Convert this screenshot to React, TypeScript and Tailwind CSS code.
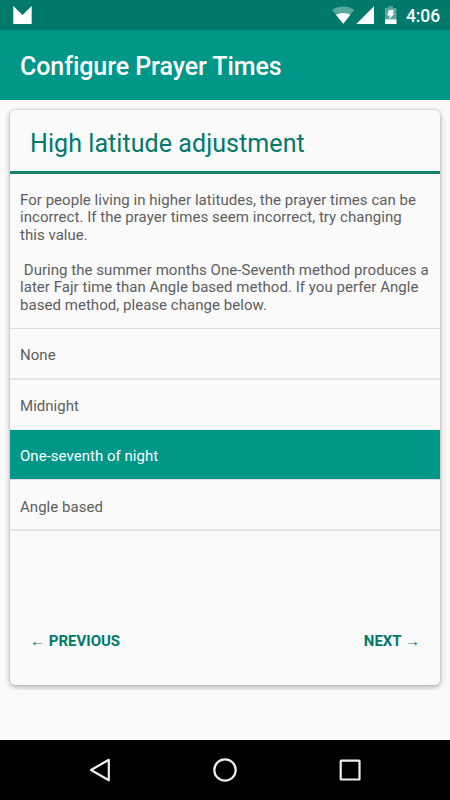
const introLines = [
  { text: "For people living in higher latitudes, the prayer times can be" },
  { text: "incorrect. If the prayer times seem incorrect, try changing" },
  { text: "this value." },
  { text: " " },
  { text: " During the summer months One-Seventh method produces a" },
  { text: "later Fajr time than Angle based method. If you perfer Angle" },
  { text: "based method, please change below." },
];

const options = [
  { label: "None", row: "h-[51px] border-b-2 border-[#e6e6e6] text-[#5e5e5e] leading-[53px]" },
  { label: "Midnight", row: "h-[50px] border-b border-[#ececec] text-[#5e5e5e] leading-[52px]" },
  { label: "One-seventh of night", row: "h-[50px] border-b border-[#dfdfdf] bg-[#009688] bg-clip-padding text-white leading-[53px]" },
  { label: "Angle based", row: "h-[51px] border-b-2 border-[#e6e6e6] text-[#5e5e5e] leading-[54px]" },
];

function StatusBar() {
  return (
    <div className="flex h-[30px] items-center bg-[#00796b]">
      <svg className="ml-[13px]" width="20" height="30" viewBox="0 0 20 30">
        <path d="M0.3 6 L9.5 15 L18.7 6 V24 H0.3 Z" fill="#fff" />
      </svg>
      <div className="grow" />
      <svg width="72" height="30" viewBox="330 0 72 30">
        <path d="M343.2 23.7 L332 9.8 Q337 6.4 343.2 6.4 Q349.4 6.4 354.3 9.8 Z" fill="#fff" fillOpacity="0.35" />
        <path d="M343.2 23.7 L336 14.8 Q343.2 11.2 350.4 14.8 Z" fill="#fff" />
        <path d="M374 6.2 V24 H356.3 Z" fill="#fff" />
        <path d="M385 8 H388.3 V6.2 H393 V8 H396.5 V19.5 H385 Z" fill="#fff" fillOpacity="0.35" />
        <path d="M385 19.3 H396.5 V24 H385 Z" fill="#fff" />
        <path d="M388.8 10 H394 L392.5 13.5 H394.600 L389 19.300 L390 15.500 H387.400 Z" fill="#fff" />
      </svg>
      <div className="ml-[4px] w-[44px] pt-px text-[17.500px] leading-[30px] font-medium tracking-[-0.1px] whitespace-nowrap text-white">4:06</div>
    </div>
  );
}

export default function App() {
  return (
    <div className="flex h-[800px] w-[450px] flex-col overflow-hidden bg-[#fafafa] font-[Roboto,sans-serif]">
      <StatusBar />
      <header className="flex h-[70px] items-center bg-[#009688] pl-5">
        <h1 className="pt-[3px] text-[25px] leading-[30px] font-medium tracking-[-0.07px] whitespace-nowrap text-white">Configure Prayer Times</h1>
      </header>
      <main className="h-[590px] shrink-0 overflow-hidden px-[10px] pt-[10px]">
        <section className="flex h-[575px] flex-col overflow-hidden rounded-[5px] bg-[#fafafa] shadow-[0_2px_6px_rgba(0,0,0,0.3),0_0_2px_rgba(0,0,0,0.2)]">
          <h2 className="h-[64px] shrink-0 border-b-[3px] border-[#16836f] pl-5 text-[25px] leading-[67px] tracking-[0.07px] whitespace-nowrap text-[#00796b]">
            High latitude adjustment
          </h2>
          <div className="h-[154px] shrink-0 pt-[17.800px] pl-[10px] text-[15px] leading-[17.500px] tracking-[0.04px] text-[#5e5e5e]">
            {introLines.map((line, i) => (
              <p key={i} className="h-[17.500px] whitespace-pre">{line.text}</p>
            ))}
          </div>
          <ul className="border-t border-[#dfdfdf] pt-0 text-[15px] tracking-[0.03px]">
            {options.map(({ label, row }) => (
              <li key={label} className={row}>
                <span className="pl-[10px]">{label}</span>
              </li>
            ))}
          </ul>
          <div className="mt-auto mb-[29px] flex justify-between px-5 text-[15px] leading-[30px] font-bold text-[#00796b]">
            <button className="whitespace-pre">← PREVIOUS</button>
            <button className="whitespace-pre">NEXT →</button>
          </div>
        </section>
      </main>
      <div className="grow" />
      <nav className="h-[60px] shrink-0 bg-black">
        <svg width="450" height="60" viewBox="0 0 450 60" fill="none" stroke="#eee" strokeWidth="2.200" strokeLinejoin="round">
          <path d="M108.800 19.800 V40.200 L91 30 Z" />
          <circle cx="225" cy="30" r="10.700" />
          <rect x="340.700" y="20.700" width="18.800" height="18.800" rx="0.500" />
        </svg>
      </nav>
    </div>
  );
}
